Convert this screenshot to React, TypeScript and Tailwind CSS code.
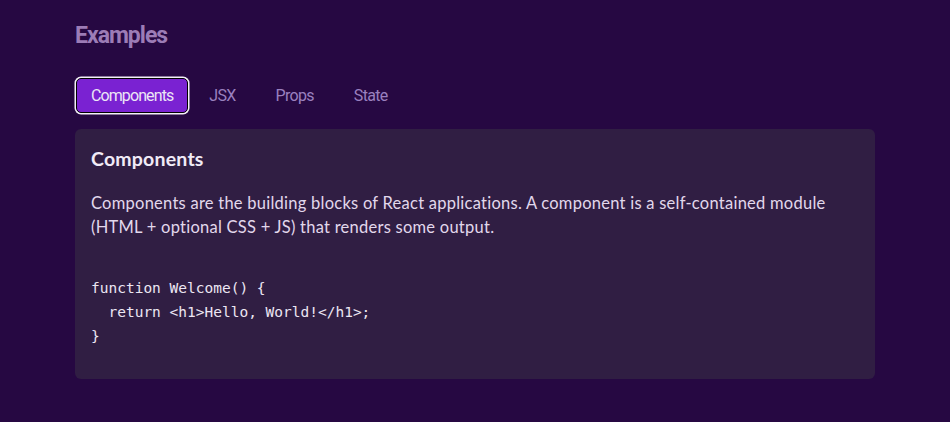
import React from "react";

export default function App() {
  const tabs = ["Components", "JSX", "Props", "State"];
  return (
    <div className="min-h-[422px] w-full bg-[#260842] px-[75px] pt-[22px] pb-[44px]">
      <h2 className="font-['Roboto','Liberation_Sans',sans-serif] text-[23px] font-bold leading-[28px] tracking-[-1px] text-[#9c7cb6]">
        Examples
      </h2>
      <div className="mt-[28px] flex items-center gap-[2px] font-['Roboto','Liberation_Sans',sans-serif]">
        {tabs.map((t, i) =>
          i === 0 ? (
            <button
              key={t}
              className="ml-[1px] h-[35px] rounded-[5px] border border-black bg-[#7a22d2] px-[14px] text-[16px] tracking-[-0.9px] text-[#ece6f5] ring-[1.5px] ring-[#f4f0f8]"
            >
              {t}
            </button>
          ) : (
            <button key={t} className="h-[35px] px-[19px] text-[16px] tracking-[-0.7px] text-[#9a80bf]">
              {t}
            </button>
          )
        )}
      </div>
      <div className="mt-[16px] w-[800px] rounded-[6px] bg-[#301e43] px-[16px] pt-[18px] pb-[31px]">
        <h3 className="font-['Lato','Open_Sans',sans-serif] text-[19.5px] font-bold leading-[24px] tracking-[0.2px] text-[#f1ebf7]">
          Components
        </h3>
        <p className="mt-[20px] font-['Lato','Open_Sans',sans-serif] text-[16.5px] leading-[24px] tracking-[0.25px] text-[#e2d8ec]">
          Components are the building blocks of React applications. A component is a self-contained module
          <br />
          (HTML + optional CSS + JS) that renders some output.
        </p>
        <pre className="mt-[37px] font-['DejaVu_Sans_Mono','Liberation_Mono',monospace] text-[14.5px] leading-[24px] text-[#ece6f3]">
{`function Welcome() {
  return <h1>Hello, World!</h1>;
}`}
        </pre>
      </div>
    </div>
  );
}
